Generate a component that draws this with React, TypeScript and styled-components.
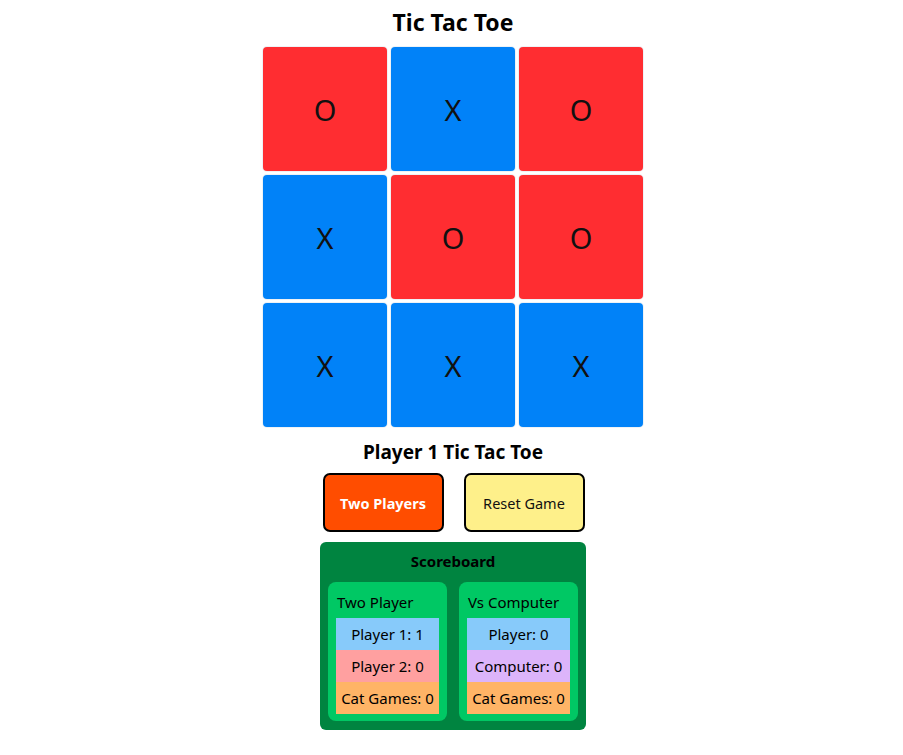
import React from "react";
import styled, { createGlobalStyle } from "styled-components";

const Global = createGlobalStyle`
  html, body { margin: 0; padding: 0; background: #ffffff; }
  body { font-family: "Noto Sans", "Open Sans", sans-serif; color: #000; }
`;

const Page = styled.div`
  display: flex;
  flex-direction: column;
  align-items: center;
  padding-left: 3px;
`;

const Title = styled.h1`
  margin: 6px 0 9px;
  font-size: 23px;
  line-height: 32px;
  font-weight: 700;
`;

const Board = styled.div`
  display: grid;
  grid-template-columns: repeat(3, 124px);
  grid-auto-rows: 124px;
  gap: 4px;
`;

const Cell = styled.div<{ $mark: "X" | "O" }>`
  display: flex;
  align-items: center;
  justify-content: center;
  border-radius: 4px;
  background: ${(p) => (p.$mark === "X" ? "#0182f8" : "#ff2d31")};
  box-shadow: 0 0 0 1px #eef2f6;
  font-size: 29px;
  font-weight: 400;
  color: #111;
`;

const Status = styled.h2`
  margin: 11px 0 7px;
  font-size: 19px;
  line-height: 28px;
  font-weight: 700;
`;

const ButtonRow = styled.div`
  display: flex;
  gap: 20px;
  padding-left: 1px;
`;

const Button = styled.button<{ $variant: "primary" | "secondary" }>`
  width: 121px;
  height: 59px;
  border: 2px solid #000;
  border-radius: 7px;
  font-family: inherit;
  font-size: 14.5px;
  cursor: pointer;
  background: ${(p) => (p.$variant === "primary" ? "#ff4d00" : "#fef08a")};
  color: ${(p) => (p.$variant === "primary" ? "#fff" : "#111")};
  font-weight: ${(p) => (p.$variant === "primary" ? 700 : 400)};
`;

const Scoreboard = styled.div`
  margin-top: 10px;
  width: 266px;
  box-sizing: border-box;
  background: #008440;
  border-radius: 6px;
  padding: 7px 8px 9px;
  display: flex;
  flex-direction: column;
  align-items: center;
`;

const ScoreTitle = styled.div`
  font-size: 15px;
  font-weight: 700;
  line-height: 24px;
  margin-bottom: 9px;
`;

const ScoreColumns = styled.div`
  display: grid;
  grid-template-columns: 1fr 1fr;
  gap: 12px;
  width: 100%;
`;

const ScoreBox = styled.div`
  background: #00c864;
  border-radius: 8px;
  padding: 8px 8px 7px;
`;

const BoxTitle = styled.div`
  font-size: 15px;
  line-height: 20px;
  margin: 2px 0 6px 1px;
`;

const ScoreRow = styled.div<{ $bg: string }>`
  background: ${(p) => p.$bg};
  height: 32px;
  display: flex;
  align-items: center;
  justify-content: center;
  font-size: 15px;
  white-space: nowrap;
`;

const board: ("X" | "O")[] = ["O", "X", "O", "X", "O", "O", "X", "X", "X"];

export default function App() {
  return (
    <Page>
      <Global />
      <Title>Tic Tac Toe</Title>
      <Board>
        {board.map((m, i) => (
          <Cell key={i} $mark={m}>
            {m}
          </Cell>
        ))}
      </Board>
      <Status>Player 1 Tic Tac Toe</Status>
      <ButtonRow>
        <Button $variant="primary">Two Players</Button>
        <Button $variant="secondary">Reset Game</Button>
      </ButtonRow>
      <Scoreboard>
        <ScoreTitle>Scoreboard</ScoreTitle>
        <ScoreColumns>
          <ScoreBox>
            <BoxTitle>Two Player</BoxTitle>
            <ScoreRow $bg="#87cafa">Player 1: 1</ScoreRow>
            <ScoreRow $bg="#ffa0a0">Player 2: 0</ScoreRow>
            <ScoreRow $bg="#ffb466">Cat Games: 0</ScoreRow>
          </ScoreBox>
          <ScoreBox>
            <BoxTitle>Vs Computer</BoxTitle>
            <ScoreRow $bg="#87cafa">Player: 0</ScoreRow>
            <ScoreRow $bg="#dcb4fa">Computer: 0</ScoreRow>
            <ScoreRow $bg="#ffb466">Cat Games: 0</ScoreRow>
          </ScoreBox>
        </ScoreColumns>
      </Scoreboard>
    </Page>
  );
}
